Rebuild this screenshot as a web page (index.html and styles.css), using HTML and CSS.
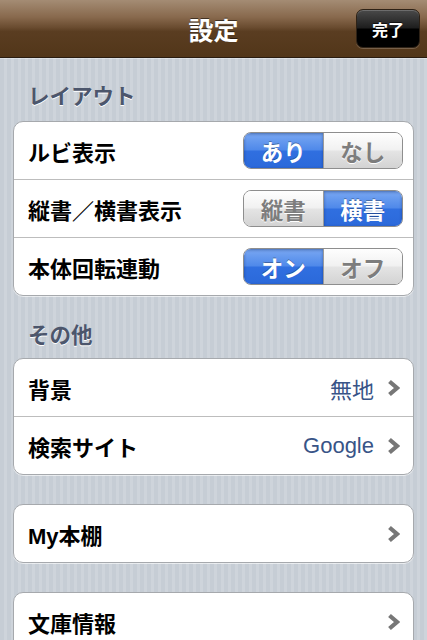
FILE: index.html
```html
<!DOCTYPE html>
<html lang="ja">
<head>
<meta charset="utf-8">
<title>設定</title>
<link rel="stylesheet" href="styles.css">
</head>
<body>
<div class="nav">
  <div class="nav-title">設定</div>
  <div class="done">完了</div>
</div>
<div class="content">
  <div class="section-header first">レイアウト</div>
  <div class="group">
    <div class="row">
      <span class="label">ルビ表示</span>
      <div class="seg">
        <span class="seg-item on">あり</span><span class="seg-item">なし</span>
      </div>
    </div>
    <div class="row">
      <span class="label">縦書／横書表示</span>
      <div class="seg">
        <span class="seg-item">縦書</span><span class="seg-item on">横書</span>
      </div>
    </div>
    <div class="row">
      <span class="label">本体回転連動</span>
      <div class="seg">
        <span class="seg-item on">オン</span><span class="seg-item">オフ</span>
      </div>
    </div>
  </div>

  <div class="section-header">その他</div>
  <div class="group">
    <div class="row">
      <span class="label">背景</span>
      <span class="value">無地</span>
      <svg class="chev" width="13" height="18" viewBox="0 0 13 18"><polyline points="2.5,2.5 10,9 2.5,15.5" fill="none" stroke="#777" stroke-width="4.2" stroke-linejoin="miter" stroke-linecap="butt"/></svg>
    </div>
    <div class="row">
      <span class="label">検索サイト</span>
      <span class="value">Google</span>
      <svg class="chev" width="13" height="18" viewBox="0 0 13 18"><polyline points="2.5,2.5 10,9 2.5,15.5" fill="none" stroke="#777" stroke-width="4.2" stroke-linejoin="miter" stroke-linecap="butt"/></svg>
    </div>
  </div>

  <div class="group spaced">
    <div class="row">
      <span class="label">My本棚</span>
      <svg class="chev" width="13" height="18" viewBox="0 0 13 18"><polyline points="2.5,2.5 10,9 2.5,15.5" fill="none" stroke="#777" stroke-width="4.2" stroke-linejoin="miter" stroke-linecap="butt"/></svg>
    </div>
  </div>

  <div class="group spaced">
    <div class="row">
      <span class="label">文庫情報</span>
      <svg class="chev" width="13" height="18" viewBox="0 0 13 18"><polyline points="2.5,2.5 10,9 2.5,15.5" fill="none" stroke="#777" stroke-width="4.2" stroke-linejoin="miter" stroke-linecap="butt"/></svg>
    </div>
  </div>
</div>
</body>
</html>
```

FILE: styles.css
```css
* { box-sizing: border-box; }

html, body {
  margin: 0;
  padding: 0;
  width: 427px;
  height: 640px;
  overflow: hidden;
}

body {
  font-family: "Liberation Sans", "Noto Sans CJK JP", sans-serif;
  background: repeating-linear-gradient(90deg, #c6cdd5 0px, #c6cdd5 4px, #ced4db 4px, #ced4db 7px);
}

.nav {
  height: 58px;
  display: flex;
  align-items: center;
  justify-content: center;
  position: relative;
  background: linear-gradient(#a48c74 0%, #88694d 30%, #6a4c30 48%, #5a3d21 55%, #523619 100%);
  border-bottom: 1px solid #2a1c10;
  box-shadow: 0 1px 0 rgba(255, 255, 255, 0.35);
}

.nav-title {
  color: #fff;
  font-family: "Noto Sans CJK JP", sans-serif;
  font-weight: 700;
  font-size: 25px;
  line-height: 30px;
  text-shadow: 0 -1px 0 rgba(0, 0, 0, 0.5);
}

.done {
  position: absolute;
  right: 7px;
  top: 9px;
  width: 64px;
  height: 39px;
  border-radius: 7px;
  border: 1px solid #2e2216;
  background: linear-gradient(#4a4a4a 0%, #1e1e1e 48%, #000 52%, #000 100%);
  box-shadow: inset 0 1px 0 rgba(255, 255, 255, 0.2), 0 1px 0 rgba(255, 255, 255, 0.2);
  color: #fff;
  font-family: "Noto Sans CJK JP", sans-serif;
  font-weight: 700;
  font-size: 16px;
  display: flex;
  align-items: center;
  justify-content: center;
  text-shadow: 0 -1px 0 rgba(0, 0, 0, 0.6);
}

.content {
  padding: 0 13px;
}

.section-header {
  padding: 25px 15px 11px;
  line-height: 26px;
  font-size: 21.5px;
  font-weight: 700;
  color: #4c566c;
  text-shadow: 0 1px 0 #fff;
  font-family: "Noto Sans CJK JP", sans-serif;
}

.section-header.first {
  padding-top: 24px;
  padding-bottom: 13px;
}

.group {
  background: #fff;
  border: 1px solid #a6a9ad;
  border-radius: 10px;
  box-shadow: 0 1px 0 rgba(255, 255, 255, 0.6);
  overflow: hidden;
}

.group.spaced {
  margin-top: 29px;
}

.row {
  height: 58px;
  display: flex;
  align-items: center;
  padding: 0 10px 0 14px;
  border-top: 1px solid #bdbdbd;
}

.row:first-child {
  border-top: none;
  height: 57px;
}

.label {
  flex: 1;
  font-size: 22px;
  font-weight: 700;
  color: #000;
}

.value {
  font-size: 22px;
  color: #385487;
  margin-right: 13px;
}

.chev {
  margin-right: 3px;
  flex: none;
}

.seg {
  display: flex;
  width: 160px;
  height: 37px;
  border-radius: 8px;
  overflow: hidden;
  border: 1px solid #8e8e8e;
}

.seg-item {
  flex: 1;
  display: flex;
  align-items: center;
  justify-content: center;
  font-family: "Noto Sans CJK JP", sans-serif;
  font-weight: 700;
  font-size: 22.5px;
  color: #7d7d7d;
  text-shadow: 0 1px 0 #fff;
  background: linear-gradient(#fefefe 0%, #f1f1f1 48%, #e4e4e4 52%, #d3d3d3 100%);
}

.seg-item + .seg-item {
  border-left: 1px solid #9a9a9a;
}

.seg-item.on {
  color: #fff;
  text-shadow: 0 -1px 0 rgba(0, 0, 0, 0.3);
  background: linear-gradient(#7aa8f2 0%, #4f89ea 48%, #306fe0 52%, #2b69da 100%);
  box-shadow: inset 0 1px 3px rgba(0, 30, 90, 0.45);
}
```
